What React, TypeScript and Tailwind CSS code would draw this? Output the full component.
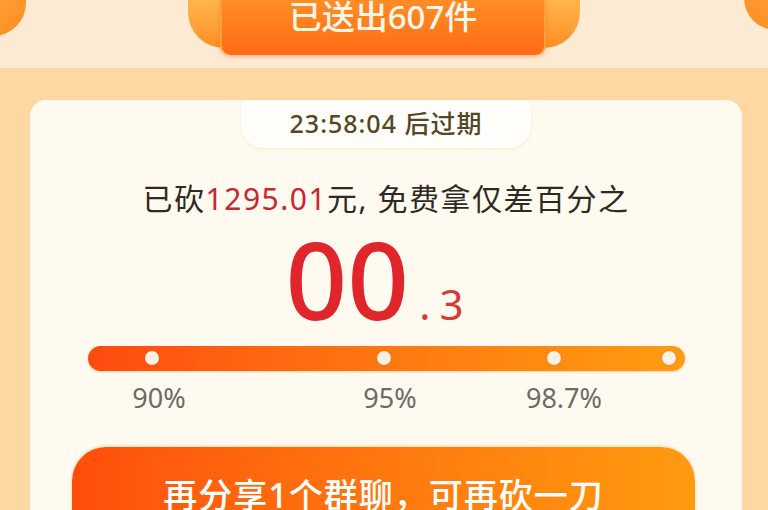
const FONT = { fontFamily: '"Noto Sans", "Noto Sans CJK SC", sans-serif' };

const DOTS = [64, 296, 466, 581];

export default function App() {
  return (
    <div
      className="relative w-[768px] h-[510px] overflow-hidden bg-[#fdead2] flex flex-col"
      style={FONT}
    >
      {/* corner decorations */}
      <div className="absolute -left-[40px] -top-[30px] w-[66px] h-[66px] rounded-full bg-gradient-to-br from-[#ffb347] to-[#ff8a1c]" />
      <div className="absolute -right-[40px] -top-[34px] w-[64px] h-[64px] rounded-full bg-gradient-to-bl from-[#ffb347] to-[#ff8a1c]" />

      {/* header banner */}
      <div className="h-[68px] shrink-0 flex justify-center">
        <div className="relative w-[392px] h-[48px] rounded-b-[36px] bg-gradient-to-b from-[#ffb64c] to-[#ff8e22] flex justify-center">
          <div className="absolute top-0 left-[32px] right-[34px] h-[55px] rounded-b-[10px] bg-gradient-to-b from-[#ff8d24] to-[#ff6a14] border-x-2 border-[#ffa040] shadow-[0_2px_4px_rgba(230,90,20,0.35)] flex justify-center">
            <span className="text-[#fff6ea] text-[33px] leading-[40px] -mt-[3px] font-medium">
              已送出607件
            </span>
          </div>
        </div>
      </div>

      {/* peach band + card */}
      <div className="flex-1 bg-[#fdd8a2] pt-[32px] pl-[30px] pr-[26px]">
        <div className="h-full bg-[#fffaef] rounded-t-[16px] flex flex-col">
          {/* timer pill */}
          <div className="mx-auto w-[290px] h-[48px] bg-[#fffefb] rounded-b-[22px] rounded-t-[8px] shadow-[0_1px_3px_rgba(240,200,150,0.35)] flex items-center justify-center">
            <span className="text-[#564623] text-[25px] font-medium tracking-[1px]">
              23:58:04 后过期
            </span>
          </div>

          {/* summary line */}
          <div className="mt-[31px] text-center text-[30px] leading-[40px] tracking-[1.5px] text-[#2e2a22]">
            已砍<span className="text-[#c9262e]">1295.01</span>元, 免费拿仅差百分之
          </div>

          {/* big number */}
          <div className="mt-[10px] flex items-baseline justify-center pr-[14px]">
            <span className="text-[108px] leading-[100px] text-[#e0262a] font-medium">00</span>
            <span className="text-[42px] leading-none text-[#d83a33] ml-[10px] tracking-[9px]">.3</span>
          </div>

          {/* progress bar */}
          <div className="relative mt-[17px] ml-[58px] w-[597px] h-[25px] rounded-full bg-gradient-to-r from-[#fe4a10] to-[#ff9c12] shadow-[0_1px_2px_rgba(220,110,20,0.3)]">
            {DOTS.map((x) => (
              <span
                key={x}
                className="absolute top-[5px] w-[14px] h-[14px] -ml-[7px] rounded-full bg-[#fff1e2] shadow-[0_0_2px_rgba(200,80,0,0.5)]"
                style={{ left: x }}
              />
            ))}
          </div>

          {/* labels */}
          <div className="mt-[10px] ml-[79px] flex text-[27px] leading-[34px] text-[#6e6a64]">
            <span className="w-[100px] text-center">90%</span>
            <span className="w-[100px] text-center ml-[131px]">95%</span>
            <span className="w-[100px] text-center ml-[74px]">98.7%</span>
          </div>

          {/* action button */}
          <div className="mt-[32px] ml-[42px] w-[623px] h-[96px] rounded-[34px] bg-gradient-to-r from-[#ff4d0c] to-[#ff9a10] shadow-[0_-1px_3px_rgba(255,150,60,0.35)] flex items-center justify-center">
            <span className="text-white text-[34px] font-medium tracking-[1px]">
              再分享1个群聊，可再砍一刀
            </span>
          </div>
        </div>
      </div>
    </div>
  );
}
